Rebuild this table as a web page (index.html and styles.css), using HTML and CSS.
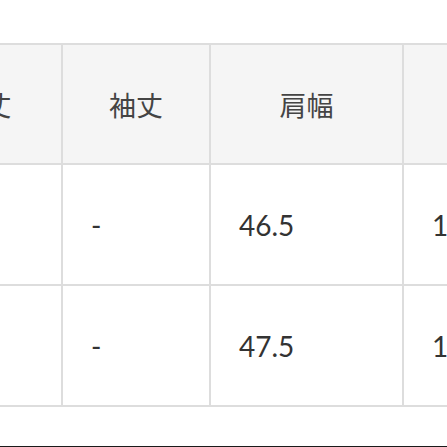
FILE: index.html
```html
<!DOCTYPE html>
<html lang="ja">
<head>
<meta charset="utf-8">
<link rel="stylesheet" href="styles.css">
</head>
<body>
<div class="page">
  <div class="size-table">
    <div class="cell head">着丈</div>
    <div class="cell head">袖丈</div>
    <div class="cell head">肩幅</div>
    <div class="cell head">身幅</div>
    <div class="cell">70</div>
    <div class="cell">-</div>
    <div class="cell">46.5</div>
    <div class="cell">1</div>
    <div class="cell">72</div>
    <div class="cell">-</div>
    <div class="cell">47.5</div>
    <div class="cell">1</div>
  </div>
  <div class="rule"></div>
</div>
</body>
</html>
```

FILE: styles.css
```css
html, body {
  margin: 0;
  padding: 0;
  background: #ffffff;
}
.page {
  width: 447px;
  height: 447px;
  overflow: hidden;
  padding-top: 43px;
  box-sizing: border-box;
}
.size-table {
  display: grid;
  grid-template-columns: 153px 146px 191px 160px;
  grid-template-rows: 118px 119px 119px;
  gap: 2px;
  background: #dddddd;
  border-top: 2px solid #dddddd;
  border-bottom: 2px solid #dddddd;
  margin-left: -92px;
  width: max-content;
}
.cell {
  background: #ffffff;
  display: flex;
  align-items: center;
  padding-left: 28px;
  font-family: Lato, "Noto Sans CJK JP", sans-serif;
  font-size: 28px;
  color: #333333;
}
.cell.head {
  background: #f5f5f5;
  justify-content: center;
  padding-left: 0;
  font-family: "Noto Sans CJK JP", sans-serif;
  font-size: 27px;
  color: #444444;
}
.rule {
  margin-top: 39px;
  height: 1px;
  background: #1a1a1a;
}
```
